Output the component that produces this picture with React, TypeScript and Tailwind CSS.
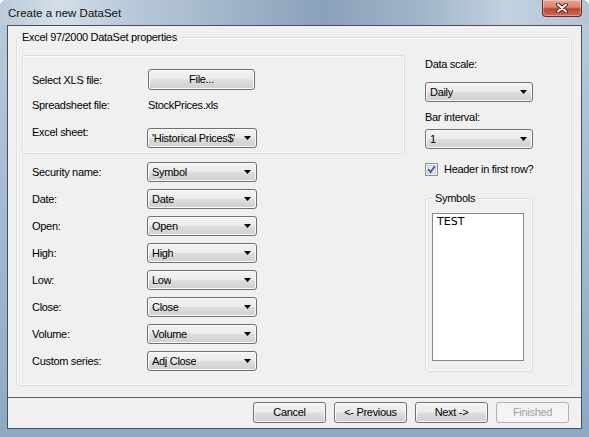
import React from "react";

const leftRows = [
  { label: "Security name:", value: "Symbol" },
  { label: "Date:", value: "Date" },
  { label: "Open:", value: "Open" },
  { label: "High:", value: "High" },
  { label: "Low:", value: "Low" },
  { label: "Close:", value: "Close" },
  { label: "Volume:", value: "Volume" },
  { label: "Custom series:", value: "Adj Close" },
];

function Arrow() {
  return (
    <svg width="7" height="4" viewBox="0 0 7 4" className="shrink-0">
      <path d="M0 0h7L3.5 4z" fill="#000" />
    </svg>
  );
}

function Combo({ value, className = "w-[110px]" }: { value: string; className?: string }) {
  return (
    <div
      className={`${className} h-[20px] shrink-0 flex items-center justify-between pl-[4px] pr-[5px] rounded-[3px] border border-[#707070] bg-[linear-gradient(#f3f3f3_0%,#ebebeb_48%,#dddddd_52%,#cfcfcf_100%)] shadow-[inset_0_0_0_1px_#fbfbfb]`}
    >
      <span className="whitespace-nowrap overflow-hidden">{value}</span>
      <Arrow />
    </div>
  );
}

function Btn({
  children,
  disabled = false,
  className = "w-[73px]",
}: {
  children: React.ReactNode;
  disabled?: boolean;
  className?: string;
}) {
  return (
    <div
      className={
        disabled
          ? `${className} h-[21px] flex items-center justify-center rounded-[3px] border border-[#adb2b5] bg-[#f4f4f4] text-[#a0a0a0]`
          : `${className} h-[21px] flex items-center justify-center rounded-[3px] border border-[#707070] bg-[linear-gradient(#f3f3f3_0%,#ebebeb_48%,#dddddd_52%,#cfcfcf_100%)] shadow-[inset_0_0_0_1px_#fbfbfb]`
      }
    >
      {children}
    </div>
  );
}

function CheckBox() {
  return (
    <svg width="13" height="13" viewBox="0 0 13 13" className="shrink-0">
      <rect x="0.5" y="0.5" width="12" height="12" fill="#f6f6f6" stroke="#8e8f8f" />
      <rect x="2.5" y="2.5" width="8" height="8" fill="#e4e8ee" stroke="#c6cbd2" />
      <path d="M3.2 6.4l2.4 2.6L9.8 3.2" stroke="#3b5aa3" strokeWidth="1.8" fill="none" />
    </svg>
  );
}

export default function App() {
  return (
    <div className="w-[589px] h-[437px] flex flex-col overflow-hidden rounded-t-[6px] bg-[linear-gradient(180deg,#b9cbdc_0%,#a4bacf_50%,#8fa8c2_100%)] font-['Liberation_Sans',Arial,sans-serif] text-[11px] leading-[13px] tracking-[-0.3px] text-black">
      {/* Title bar */}
      <div className="h-[25px] shrink-0 flex items-start justify-between pl-[8px] pr-[7px] bg-[linear-gradient(90deg,#bccbd9_0%,#d3dee8_10%,#b9c9d9_22%,#9fb3c8_40%,#8aa1ba_55%,#a2b6ca_72%,#c3d1de_86%,#b2c4d6_100%)]">
        <span className="mt-[6px] text-[11.5px] leading-[14px] tracking-[0px] text-[#111]">
          Create a new DataSet
        </span>
        <div className="w-[40px] h-[17px] flex items-center justify-center rounded-b-[4px] border border-t-0 border-[#6a2b22] bg-[linear-gradient(#e3a697_0%,#d68472_45%,#c2442e_55%,#cc6a55_100%)] shadow-[inset_0_0_0_1px_rgba(255,255,255,0.35)]">
          <svg width="12" height="10" viewBox="0 0 12 10">
            <path d="M2 1.5l8 7M10 1.5l-8 7" stroke="#5a2119" strokeWidth="4" strokeLinecap="round" />
            <path d="M2 1.5l8 7M10 1.5l-8 7" stroke="#fff" strokeWidth="2" strokeLinecap="round" />
          </svg>
        </div>
      </div>

      {/* Body */}
      <div className="flex-1 mx-[7px] mb-[8px] flex flex-col border border-[#44505e] bg-[#f0f0f0]">
        <div className="flex-1 pt-[11px] pl-[8px] pr-[9px]">
          {/* Outer group box */}
          <div className="h-[349px] flex flex-col rounded-[3px] border border-[#d5dfe5] shadow-[inset_0_0_0_1px_#fbfbfb]">
            <span className="-mt-[7px] ml-[4px] w-fit px-[1px] bg-[#f0f0f0]">
              Excel 97/2000 DataSet properties
            </span>

            <div className="flex mt-[11px] pl-[5px]">
              {/* Left column */}
              <div className="w-[383px] flex flex-col">
                <div className="h-[99px] flex flex-col pt-[13px] pl-[9px] rounded-[3px] border border-[#d5dfe5] shadow-[inset_0_0_0_1px_#fbfbfb]">
                  <div className="flex items-start h-[20px]">
                    <span className="w-[115px] mt-[5px]">Select XLS file:</span>
                    <Btn className="w-[107px] ml-[1px]">File...</Btn>
                  </div>
                  <div className="flex mt-[10px] h-[13px]">
                    <span className="w-[116px]">Spreadsheet file:</span>
                    <span>StockPrices.xls</span>
                  </div>
                  <div className="flex items-start mt-[16px] h-[20px]">
                    <span className="w-[115px] -mt-[2px]">Excel sheet:</span>
                    <Combo value="'Historical Prices$'" />
                  </div>
                </div>

                <div className="flex flex-col gap-[7px] mt-[8px] pl-[10px]">
                  {leftRows.map((r) => (
                    <div key={r.label} className="flex items-center h-[20px]">
                      <span className="w-[115px]">{r.label}</span>
                      <Combo value={r.value} />
                    </div>
                  ))}
                </div>
              </div>

              {/* Right column */}
              <div className="w-[108px] ml-[20px] flex flex-col pt-[3px]">
                <span>Data scale:</span>
                <Combo value="Daily" className="w-[108px] mt-[11px]" />
                <span className="mt-[9px]">Bar interval:</span>
                <Combo value="1" className="w-[108px] mt-[5px]" />
                <div className="flex items-center gap-[6px] mt-[14px] h-[13px]">
                  <CheckBox />
                  <span className="whitespace-nowrap">Header in first row?</span>
                </div>
                <div className="h-[174px] mt-[22px] flex flex-col pl-[6px] rounded-[3px] border border-[#d5dfe5] shadow-[inset_0_0_0_1px_#fbfbfb]">
                  <span className="-mt-[7px] ml-[2px] w-fit px-[1px] bg-[#f0f0f0]">Symbols</span>
                  <div className="w-[92px] h-[148px] mt-[8px] border border-[#828790] bg-white pl-[4px] pt-[1px] font-['DejaVu_Sans',sans-serif] text-[11px] tracking-[0px]">
                    TEST
                  </div>
                </div>
              </div>
            </div>
          </div>
        </div>

        {/* Button bar */}
        <div className="h-[31px] shrink-0 flex justify-end gap-[8px] pt-[4px] pr-[12px] border-t border-[#5f5f5f]">
          <Btn>Cancel</Btn>
          <Btn>&lt;- Previous</Btn>
          <Btn>Next -&gt;</Btn>
          <Btn disabled>Finished</Btn>
        </div>
      </div>
    </div>
  );
}
